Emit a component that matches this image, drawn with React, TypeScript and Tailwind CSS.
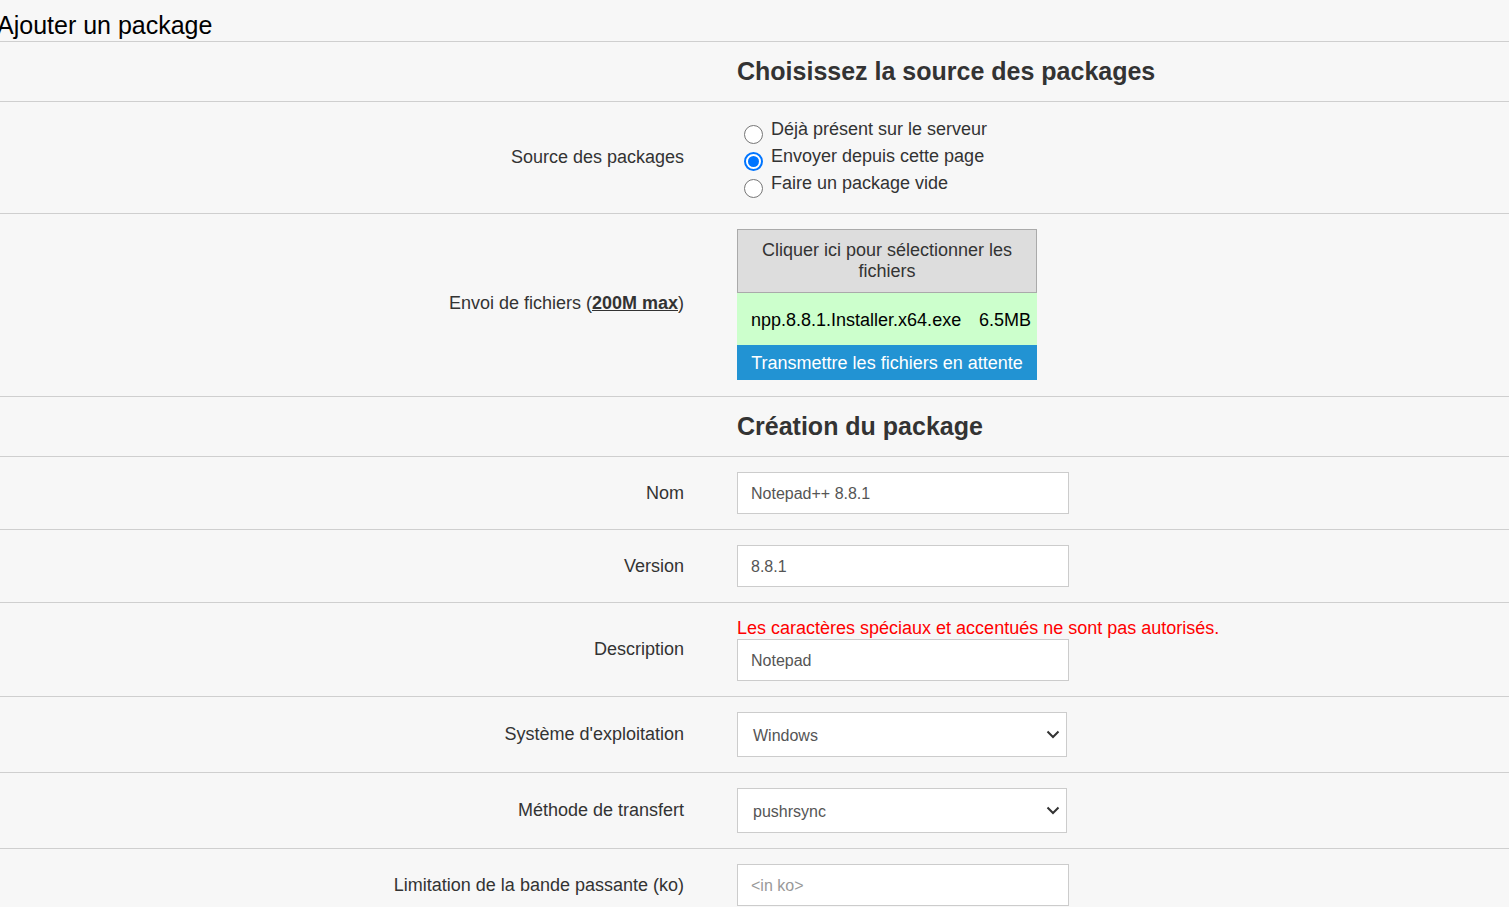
import React from "react";

const font = { fontFamily: '"Liberation Sans", Arial, sans-serif' };

function Row({ label, h, children, labelNode }: { label?: string; h: string; children: React.ReactNode; labelNode?: React.ReactNode }) {
  return (
    <div className={`grid grid-cols-[684px_1fr] border-b border-[#cfcfcf] ${h}`}>
      <div className="flex items-center justify-end text-[18px] text-[#333]">{labelNode ?? label}</div>
      <div className="pl-[53px]">{children}</div>
    </div>
  );
}

function Radio({ checked, text }: { checked?: boolean; text: string }) {
  return (
    <div className="flex h-[27px] items-center">
      <span
        className={`ml-[7px] mt-[10px] flex h-[19px] w-[19px] shrink-0 items-center justify-center rounded-full bg-white ${
          checked ? "border-2 border-[#0075ff]" : "border border-[#767676]"
        }`}
      >
        {checked && <span className="h-[11px] w-[11px] rounded-full bg-[#0075ff]" />}
      </span>
      <span className="ml-[8px] text-[18px] text-[#333]">{text}</span>
    </div>
  );
}

function Input({ value, placeholder }: { value?: string; placeholder?: string }) {
  return (
    <div className="flex h-[42px] w-[332px] items-center border border-[#ccc] bg-white pl-[13px] pt-[2px] text-[16px]">
      {value ? <span className="text-[#555]">{value}</span> : <span className="text-[#999]">{placeholder}</span>}
    </div>
  );
}

function Select({ value }: { value: string }) {
  return (
    <div className="flex h-[45px] w-[330px] items-center justify-between border border-[#ccc] bg-white pl-[15px] pr-[6px] text-[16px] text-[#555]">
      <span className="mt-[2px]">{value}</span>
      <svg width="14" height="9" viewBox="0 0 14 9">
        <path d="M1.5 1.5 L7 7 L12.5 1.5" fill="none" stroke="#333" strokeWidth="2" />
      </svg>
    </div>
  );
}

export default function App() {
  return (
    <div className="min-h-screen bg-[#f7f7f7]" style={font}>
      <div className="h-[42px] border-b border-[#cfcfcf] pt-[11px]">
        <h1 className="ml-[-3px] text-[25px] leading-[29px] text-black">Ajouter un package</h1>
      </div>

      <Row h="h-[60px]">
        <div className="flex h-full items-center text-[25px] font-bold text-[#333]">Choisissez la source des packages</div>
      </Row>

      <Row label="Source des packages" h="h-[112px]">
        <div className="pt-[14px]">
          <Radio text="Déjà présent sur le serveur" />
          <Radio checked text="Envoyer depuis cette page" />
          <Radio text="Faire un package vide" />
        </div>
      </Row>

      <Row
        h="h-[183px]"
        labelNode={
          <span className="mt-[-3px]">
            Envoi de fichiers (<span className="font-bold underline">200M max</span>)
          </span>
        }
      >
        <div className="mt-[15px] w-[300px]">
          <div className="h-[64px] border border-[#aaa] bg-[#dddddd] px-[10px] pt-[10px] text-center text-[18px] leading-[21px] text-[#333]">
            Cliquer ici pour sélectionner les fichiers
          </div>
          <div className="flex h-[52px] items-center justify-between bg-[#ccffcc] pl-[14px] pr-[6px] pt-[2px] text-[18px] text-black">
            <span>npp.8.8.1.Installer.x64.exe</span>
            <span>6.5MB</span>
          </div>
          <div className="flex h-[35px] items-center justify-center bg-[#2293d3] pt-[2px] text-[18px] text-white">
            Transmettre les fichiers en attente
          </div>
        </div>
      </Row>

      <Row h="h-[60px]">
        <div className="flex h-full items-center text-[25px] font-bold text-[#333]">Création du package</div>
      </Row>

      <Row label="Nom" h="h-[73px]">
        <div className="pt-[15px]">
          <Input value="Notepad++ 8.8.1" />
        </div>
      </Row>

      <Row label="Version" h="h-[73px]">
        <div className="pt-[15px]">
          <Input value="8.8.1" />
        </div>
      </Row>

      <Row label="Description" h="h-[94px]">
        <div className="pt-[14px]">
          <div className="h-[22px] text-[18px] leading-[22px] text-[#ff0000]">
            Les caractères spéciaux et accentués ne sont pas autorisés.
          </div>
          <Input value="Notepad" />
        </div>
      </Row>

      <Row label="Système d'exploitation" h="h-[76px]">
        <div className="pt-[15px]">
          <Select value="Windows" />
        </div>
      </Row>

      <Row label="Méthode de transfert" h="h-[76px]">
        <div className="pt-[15px]">
          <Select value="pushrsync" />
        </div>
      </Row>

      <Row label="Limitation de la bande passante (ko)" h="h-[73px]">
        <div className="pt-[15px]">
          <Input placeholder="<in ko>" />
        </div>
      </Row>
    </div>
  );
}
